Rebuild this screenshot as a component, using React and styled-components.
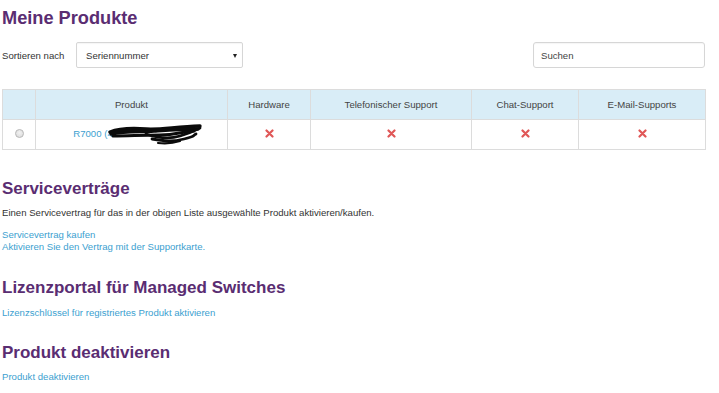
import React from "react";
import styled, { createGlobalStyle } from "styled-components";

const Global = createGlobalStyle`
  html, body { margin: 0; padding: 0; background: #fff; }
  body { font-family: "Liberation Sans", Arial, sans-serif; color: #333; }
`;

const Page = styled.div`
  padding: 8px 14px 0 2px;
  width: 703px;
`;

const Title = styled.h1`
  margin: 0;
  font-size: 18.2px;
  line-height: 20px;
  font-weight: bold;
  color: #5a2d72;
`;

const Heading = styled.h2`
  margin: ${(p) => p.$top}px 0 0;
  font-size: 17px;
  line-height: 20px;
  font-weight: bold;
  color: #5a2d72;
`;

const Toolbar = styled.div`
  display: flex;
  align-items: center;
  margin-top: 14px;
  height: 26px;
`;

const Label = styled.span`
  font-size: 9.6px;
  width: 74px;
  color: #333;
`;

const SelectBox = styled.div`
  box-sizing: border-box;
  width: 167px;
  height: 26px;
  border: 1px solid #d6d6d6;
  border-radius: 2px;
  display: flex;
  align-items: center;
  justify-content: space-between;
  padding: 0 5px 0 9px;
  font-size: 9.6px;
  color: #333;
  box-shadow: inset 0 1px 1px rgba(0, 0, 0, 0.04);
`;

const Caret = styled.span`
  width: 0;
  height: 0;
  border-left: 2.5px solid transparent;
  border-right: 2.5px solid transparent;
  border-top: 4px solid #222;
  margin-top: 1px;
`;

const Spacer = styled.div`
  flex: 1;
`;

const Search = styled.input`
  box-sizing: border-box;
  width: 172px;
  height: 26px;
  border: 1px solid #d6d6d6;
  border-radius: 3px;
  padding: 0 7px;
  font-family: inherit;
  font-size: 9.6px;
  outline: none;
  box-shadow: inset 0 1px 1px rgba(0, 0, 0, 0.04);
  &::placeholder { color: #444; }
`;

const Table = styled.table`
  margin-top: 21px;
  width: 703px;
  border-collapse: collapse;
  table-layout: fixed;
  font-size: 9.6px;
`;

const Th = styled.th`
  background: #d9edf7;
  border: 1px solid #dcdcdc;
  height: 29px;
  padding: 0;
  font-weight: normal;
  color: #444;
  text-align: center;
`;

const Td = styled.td`
  border: 1px solid #dcdcdc;
  height: 29px;
  padding: 0;
  text-align: center;
  vertical-align: middle;
`;

const Radio = styled.span`
  display: inline-block;
  box-sizing: border-box;
  width: 9px;
  height: 9px;
  border-radius: 50%;
  border: 1px solid #b9b9b9;
  background: radial-gradient(circle at 50% 40%, #f2f2f2, #d8d8d8);
  margin-top: -3px;
  vertical-align: middle;
`;

const ProductLink = styled.a`
  display: inline-flex;
  align-items: center;
  color: #3d9fd0;
  text-decoration: none;
  margin-left: 12px;
  margin-top: -3px;
`;

const Paragraph = styled.p`
  margin: ${(p) => p.$top}px 0 0;
  font-size: 9.6px;
  line-height: 12px;
  color: #333;
`;

const LinkList = styled.div`
  margin-top: ${(p) => p.$top}px;
  display: flex;
  flex-direction: column;
`;

const Link = styled.a`
  font-size: 9.6px;
  line-height: 12px;
  color: #3d9fd0;
  text-decoration: none;
`;

const Cross = () => (
  <svg width="9" height="9" viewBox="0 0 9 9" style={{ marginTop: -4, verticalAlign: "middle" }}>
    <path d="M1.5 1.5 L7.5 7.5 M7.5 1.5 L1.5 7.5" stroke="#e05757" strokeWidth="2.2" strokeLinecap="round" />
  </svg>
);

const Scribble = () => (
  <svg width="94" height="22" viewBox="0 0 94 22" style={{ marginLeft: -5, marginTop: 4 }}>
    <g fill="none" stroke="#0b0b0b" strokeLinecap="round" strokeLinejoin="round">
      <path d="M2 8 C 12 4, 24 4, 38 5 S 66 3, 92 2" strokeWidth="3.4" />
      <path d="M3 10 C 18 7, 32 8, 46 7 S 72 5, 90 5" strokeWidth="3.4" />
      <path d="M5 12 C 20 12, 34 11, 52 11 S 70 8, 86 7" strokeWidth="3" />
      <path d="M38 10 C 50 14, 62 15, 72 12 S 84 8, 92 4" strokeWidth="2.8" />
      <path d="M44 15 C 56 17, 64 18, 76 15 S 84 12, 88 10" strokeWidth="2.8" />
      <path d="M50 19 C 58 20, 66 19, 72 17" strokeWidth="2.2" />
      <path d="M8 7 C 20 5, 30 6, 42 8" strokeWidth="2.2" />
    </g>
  </svg>
);

const columns = [
  { key: "sel", label: "", width: 33 },
  { key: "prod", label: "Produkt", width: 192 },
  { key: "hw", label: "Hardware", width: 83 },
  { key: "tel", label: "Telefonischer Support", width: 161 },
  { key: "chat", label: "Chat-Support", width: 107 },
  { key: "mail", label: "E-Mail-Supports", width: 127 },
];

export default function App() {
  return (
    <>
      <Global />
      <Page>
        <Title>Meine Produkte</Title>
        <Toolbar>
          <Label>Sortieren nach</Label>
          <SelectBox>
            <span>Seriennummer</span>
            <Caret />
          </SelectBox>
          <Spacer />
          <Search placeholder="Suchen" />
        </Toolbar>

        <Table>
          <colgroup>
            {columns.map((c) => (
              <col key={c.key} style={{ width: c.width }} />
            ))}
          </colgroup>
          <thead>
            <tr>
              {columns.map((c) => (
                <Th key={c.key}>{c.label}</Th>
              ))}
            </tr>
          </thead>
          <tbody>
            <tr>
              <Td>
                <Radio />
              </Td>
              <Td>
                <ProductLink href="#">
                  <span>R7000 (4</span>
                  <Scribble />
                </ProductLink>
              </Td>
              <Td><Cross /></Td>
              <Td><Cross /></Td>
              <Td><Cross /></Td>
              <Td><Cross /></Td>
            </tr>
          </tbody>
        </Table>

        <Heading $top={29}>Serviceverträge</Heading>
        <Paragraph $top={8}>
          Einen Servicevertrag für das in der obigen Liste ausgewählte Produkt aktivieren/kaufen.
        </Paragraph>
        <LinkList $top={10}>
          <Link href="#">Servicevertrag kaufen</Link>
          <Link href="#">Aktivieren Sie den Vertrag mit der Supportkarte.</Link>
        </LinkList>

        <Heading $top={25}>Lizenzportal für Managed Switches</Heading>
        <LinkList $top={9}>
          <Link href="#">Lizenzschlüssel für registriertes Produkt aktivieren</Link>
        </LinkList>

        <Heading $top={24}>Produkt deaktivieren</Heading>
        <LinkList $top={8}>
          <Link href="#">Produkt deaktivieren</Link>
        </LinkList>
      </Page>
    </>
  );
}
